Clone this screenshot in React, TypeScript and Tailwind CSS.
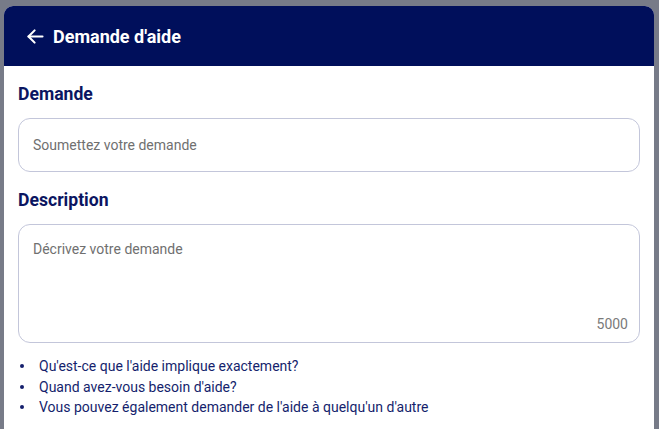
import React from "react";

export default function App() {
  return (
    <div
      className="w-[659px] h-[429px] overflow-hidden bg-[#777b88] pl-[4px] pt-[6px]"
      style={{ fontFamily: "Roboto, 'Noto Sans', sans-serif" }}
    >
      <div className="w-[650px] h-[440px] bg-white rounded-t-[9px] overflow-hidden flex flex-col">
        <div className="h-[60px] bg-[#000f5b] flex items-center pl-[21px] shrink-0">
          <svg width="21" height="21" viewBox="0 0 24 24" fill="none" stroke="white" strokeWidth="2.4" strokeLinecap="round" strokeLinejoin="round">
            <path d="M20 12H4" />
            <path d="M11 5l-7 7 7 7" />
          </svg>
          <span className="ml-[7px] text-white text-[18px] font-bold">Demande d'aide</span>
        </div>
        <div className="px-[14px] pt-[16px] flex flex-col">
          <div className="text-[17.6px] leading-[24px] font-bold text-[#0b1561]">Demande</div>
          <div className="mt-[12px] h-[54px] rounded-[12px] border border-[#c3c6da] flex items-center px-[14px]">
            <span className="text-[14px] text-[#707070]">Soumettez votre demande</span>
          </div>
          <div className="mt-[16px] text-[17.6px] leading-[24px] font-bold text-[#0b1561]">Description</div>
          <div className="mt-[12px] h-[119px] rounded-[12px] border border-[#c3c6da] flex flex-col justify-between px-[14px] pt-[15px] pb-[9px]">
            <span className="text-[14px] text-[#707070] leading-[18px]">Décrivez votre demande</span>
            <span className="self-end -mr-[3px] text-[14px] text-[#7a7a7a] leading-[18px]">5000</span>
          </div>
          <ul className="mt-[13px] flex flex-col text-[14px] leading-[20.5px] text-[#151f6d]">
            {[
              "Qu'est-ce que l'aide implique exactement?",
              "Quand avez-vous besoin d'aide?",
              "Vous pouvez également demander de l'aide à quelqu'un d'autre",
            ].map((t) => (
              <li key={t} className="flex items-center">
                <span className="w-[4px] h-[4px] rounded-full bg-[#151f6d] ml-[2px] mr-[15px]" />
                <span>{t}</span>
              </li>
            ))}
          </ul>
        </div>
      </div>
    </div>
  );
}
